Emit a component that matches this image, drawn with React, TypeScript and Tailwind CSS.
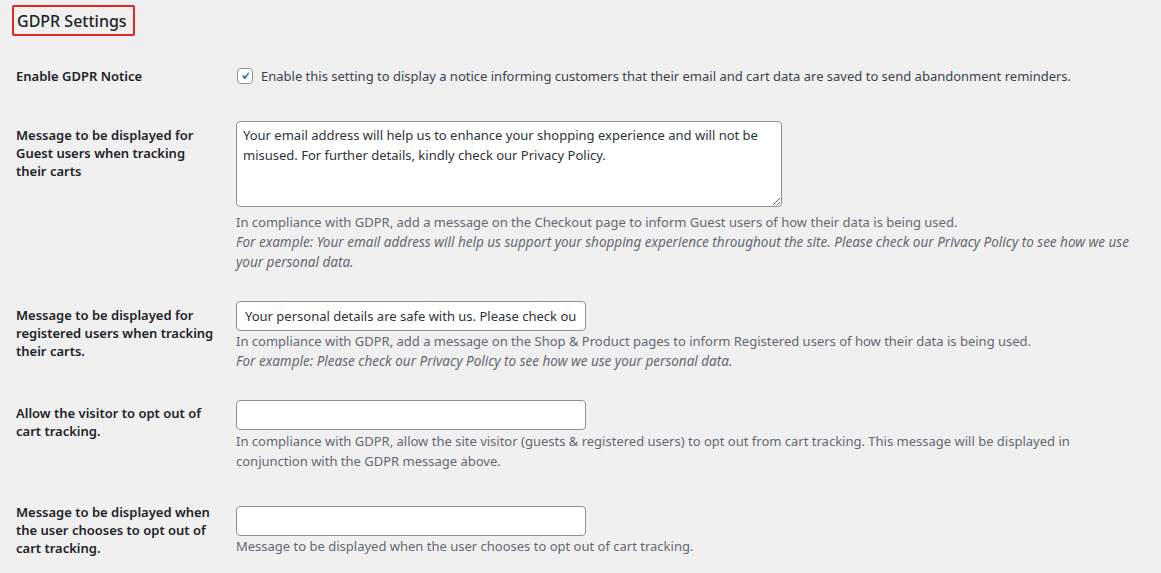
import React from 'react'

const font = { fontFamily: '"Noto Sans", "Open Sans", sans-serif' }

function Checkbox() {
  return (
    <span className="flex h-4 w-4 shrink-0 items-center justify-center rounded-[4px] border border-[#8c8f94] bg-white">
      <svg viewBox="0 0 20 20" className="h-[18px] w-[18px]" fill="#2271b1">
        <path d="M14.83 4.89l1.34.94-5.81 8.38H9.02L5.78 9.67l1.34-1.25 2.57 2.4z" />
      </svg>
    </span>
  )
}

function Label({ children, pt }: { children: React.ReactNode; pt: string }) {
  return (
    <div className={`w-[220px] shrink-0 whitespace-nowrap text-[13px] font-semibold leading-[18px] text-[#1d2327] ${pt}`}>
      {children}
    </div>
  )
}

function Description({ children, className = '' }: { children: React.ReactNode; className?: string }) {
  return <p className={`whitespace-nowrap text-[13px] leading-[20px] text-[#646970] ${className}`}>{children}</p>
}

const inputCls =
  'block h-[30px] w-[350px] rounded-[4px] border border-[#8c8f94] bg-white px-2 text-[13px] text-[#2c3338] outline-none'

export default function App() {
  return (
    <div className="min-h-[573px] bg-[#f0f0f1] pl-3 pt-[5px] text-[#3c434a]" style={font}>
      <div className="flex h-[31px] w-[123px] items-center rounded-[2px] border-2 border-[#e3262a] pl-[3px]">
        <h2 className="whitespace-nowrap text-[16px] font-medium leading-none text-[#1d2327]">GDPR Settings</h2>
      </div>

      <div className="pl-1">
        {/* Enable notice */}
        <div className="mt-[31px] flex h-[18px] items-center">
          <Label pt="">Enable GDPR Notice</Label>
          <div className="ml-[1px] flex items-center gap-[8px]">
            <Checkbox />
            <span className="whitespace-nowrap text-[13px] leading-[18px] text-[#3c434a]">
              Enable this setting to display a notice informing customers that their email and cart data are saved to send abandonment reminders.
            </span>
          </div>
        </div>

        {/* Guest message */}
        <div className="mt-[36px] flex">
          <Label pt="pt-[5px]">
            Message to be displayed for
            <br />
            Guest users when tracking
            <br />
            their carts
          </Label>
          <div>
            <textarea
              readOnly
              className="block h-[86px] w-[546px] rounded-[4px] border border-[#8c8f94] bg-white px-[6px] pt-[3px] text-[13px] leading-[20px] text-[#2c3338] outline-none"
              defaultValue="Your email address will help us to enhance your shopping experience and will not be misused. For further details, kindly check our Privacy Policy."
            />
            <Description className="mt-[5px]">
              In compliance with GDPR, add a message on the Checkout page to inform Guest users of how their data is being used.
              <br />
              <em className="text-[13.5px]">
                For example: Your email address will help us support your shopping experience throughout the site. Please check our Privacy Policy to see how we use
                <br />
                your personal data.
              </em>
            </Description>
          </div>
        </div>

        {/* Registered message */}
        <div className="mt-[29px] flex">
          <Label pt="pt-[5px]">
            Message to be displayed for
            <br />
            registered users when tracking
            <br />
            their carts.
          </Label>
          <div>
            <input
              readOnly
              className={inputCls}
              defaultValue="Your personal details are safe with us. Please check our Privacy Policy for more details."
            />
            <Description>
              In compliance with GDPR, add a message on the Shop &amp; Product pages to inform Registered users of how their data is being used.
              <br />
              <em className="text-[13.5px]">For example: Please check our Privacy Policy to see how we use your personal data.</em>
            </Description>
          </div>
        </div>

        {/* Opt out */}
        <div className="mt-[29px] flex">
          <Label pt="pt-[4px]">
            Allow the visitor to opt out of
            <br />
            cart tracking.
          </Label>
          <div>
            <input className={inputCls} defaultValue="" />
            <Description className="mt-[1px]">
              In compliance with GDPR, allow the site visitor (guests &amp; registered users) to opt out from cart tracking. This message will be displayed in
              <br />
              conjunction with the GDPR message above.
            </Description>
          </div>
        </div>

        {/* Opt out message */}
        <div className="mt-[32px] flex">
          <Label pt="">
            Message to be displayed when
            <br />
            the user chooses to opt out of
            <br />
            cart tracking.
          </Label>
          <div className="pt-[3px]">
            <input className={inputCls} defaultValue="" />
            <Description>Message to be displayed when the user chooses to opt out of cart tracking.</Description>
          </div>
        </div>
      </div>
    </div>
  )
}
